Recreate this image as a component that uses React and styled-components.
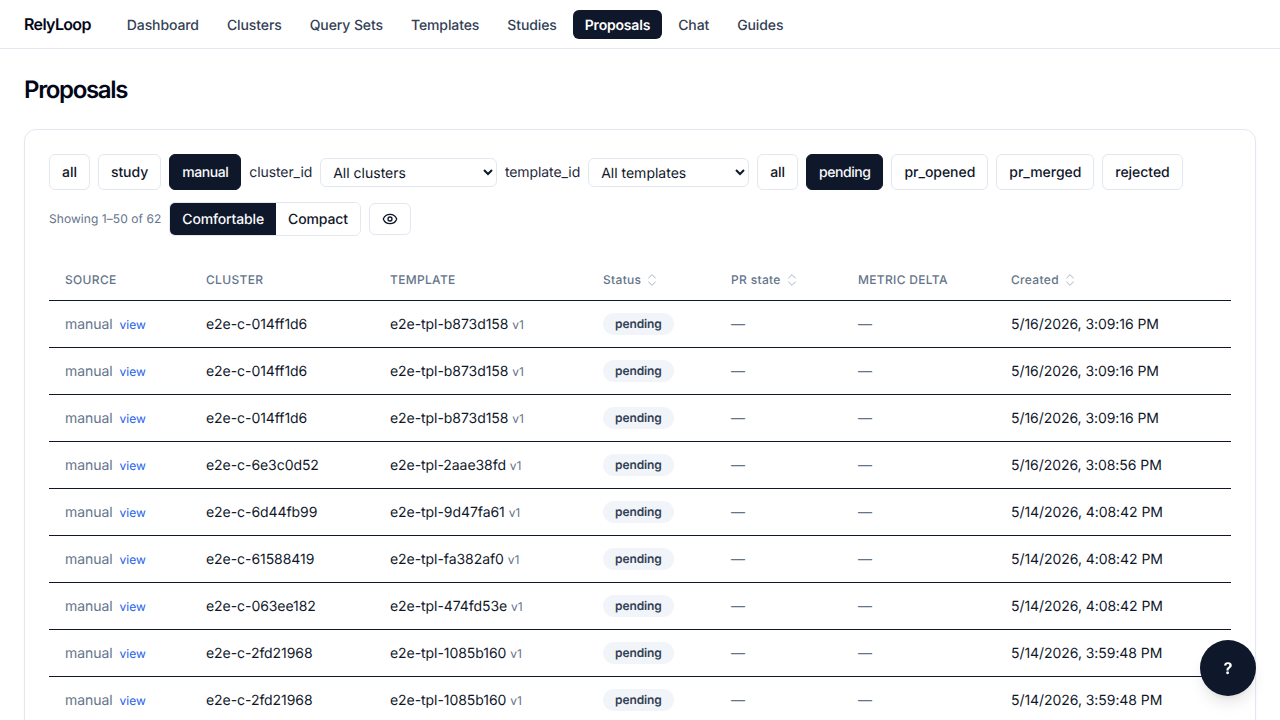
import React from "react";
import styled, { createGlobalStyle } from "styled-components";
import { ChevronsUpDown, Eye } from "lucide-react";

const navLinks = ["Dashboard", "Clusters", "Query Sets", "Templates", "Studies", "Proposals", "Chat", "Guides"];

const rows = [
  ["e2e-c-014ff1d6", "e2e-tpl-b873d158", "5/16/2026, 3:09:16 PM"],
  ["e2e-c-014ff1d6", "e2e-tpl-b873d158", "5/16/2026, 3:09:16 PM"],
  ["e2e-c-014ff1d6", "e2e-tpl-b873d158", "5/16/2026, 3:09:16 PM"],
  ["e2e-c-6e3c0d52", "e2e-tpl-2aae38fd", "5/16/2026, 3:08:56 PM"],
  ["e2e-c-6d44fb99", "e2e-tpl-9d47fa61", "5/14/2026, 4:08:42 PM"],
  ["e2e-c-61588419", "e2e-tpl-fa382af0", "5/14/2026, 4:08:42 PM"],
  ["e2e-c-063ee182", "e2e-tpl-474fd53e", "5/14/2026, 4:08:42 PM"],
  ["e2e-c-2fd21968", "e2e-tpl-1085b160", "5/14/2026, 3:59:48 PM"],
  ["e2e-c-2fd21968", "e2e-tpl-1085b160", "5/14/2026, 3:59:48 PM"],
];

const columns = [
  { label: "Source", width: 141 },
  { label: "Cluster", width: 184 },
  { label: "Template", width: 213 },
  { label: "Status", width: 128, sortable: true },
  { label: "PR state", width: 127, sortable: true },
  { label: "Metric delta", width: 153 },
  { label: "Created", width: 236, sortable: true },
];

const App = () => (
  <>
    <GlobalStyle />
    <Nav>
      <Logo>RelyLoop</Logo>
      <NavLinks>
        {navLinks.map((link) => (
          <NavItem key={link} $active={link === "Proposals"}>
            {link}
          </NavItem>
        ))}
      </NavLinks>
    </Nav>
    <Main>
      <Title>Proposals</Title>
      <Card>
        <FilterRow>
          <FilterButton>all</FilterButton>
          <FilterButton>study</FilterButton>
          <FilterButton $active>manual</FilterButton>
          <FilterLabel>cluster_id</FilterLabel>
          <Select $width={176.7}>
            <option>All clusters</option>
          </Select>
          <FilterLabel>template_id</FilterLabel>
          <Select $width={161}>
            <option>All templates</option>
          </Select>
          <FilterButton>all</FilterButton>
          <FilterButton $active>pending</FilterButton>
          <FilterButton>pr_opened</FilterButton>
          <FilterButton>pr_merged</FilterButton>
          <FilterButton>rejected</FilterButton>
        </FilterRow>
        <ToolRow>
          <Showing>Showing 1–50 of 62</Showing>
          <Density>
            <DensityOption $active>Comfortable</DensityOption>
            <DensityOption>Compact</DensityOption>
          </Density>
          <ColumnsButton aria-label="Columns">
            <Eye size={16} strokeWidth={2} />
          </ColumnsButton>
        </ToolRow>
        <Table>
          <colgroup>
            {columns.map((col) => (
              <col key={col.label} width={col.width} />
            ))}
          </colgroup>
          <thead>
            <tr>
              {columns.map((col) => (
                <Th key={col.label} $sortable={col.sortable}>
                  <HeadInner>
                    {col.label}
                    {col.sortable && <ChevronsUpDown size={16} strokeWidth={1.5} color="#a8b4c4" />}
                  </HeadInner>
                </Th>
              ))}
            </tr>
          </thead>
          <tbody>
            {rows.map(([cluster, template, created], i) => (
              <tr key={i}>
                <Td>
                  <Source>manual</Source>
                  <ViewLink>view</ViewLink>
                </Td>
                <Td>{cluster}</Td>
                <Td>
                  {template} <Version>v1</Version>
                </Td>
                <BadgeCell>
                  <Badge>pending</Badge>
                </BadgeCell>
                <Td>
                  <Dash>—</Dash>
                </Td>
                <Td>
                  <Dash>—</Dash>
                </Td>
                <Td>{created}</Td>
              </tr>
            ))}
          </tbody>
        </Table>
      </Card>
    </Main>
    <HelpButton>?</HelpButton>
  </>
);

const GlobalStyle = createGlobalStyle`
  * { box-sizing: border-box; }
  html, body { margin: 0; background: #fff; }
  html { overflow: hidden; }
  body {
    height: 720px;
    overflow: hidden;
    font-family: Inter, "Liberation Sans", sans-serif;
    color: #0f172a;
    text-rendering: geometricPrecision;
  }
  button, select { text-rendering: geometricPrecision; }
`;

const Nav = styled.nav`
  height: 49px;
  display: flex;
  align-items: center;
  padding: 0 24px;
  border-bottom: 1px solid #e2e8f0;
`;

const Logo = styled.div`
  font-size: 16px;
  font-weight: 600;
  letter-spacing: -0.65px;
  color: #020617;
  margin-right: 24px;
`;

const NavLinks = styled.div`
  display: flex;
  gap: 4px;
`;

const NavItem = styled.a`
  height: 29px;
  display: flex;
  align-items: center;
  padding: 2px 12px 0;
  border-radius: 6px;
  font-size: 14px;
  letter-spacing: ${({ $active }) => ($active ? "-0.2px" : "-0.1px")};
  font-weight: ${({ $active }) => ($active ? 600 : 500)};
  color: ${({ $active }) => ($active ? "#fff" : "#334155")};
  background: ${({ $active }) => ($active ? "#0f172a" : "transparent")};
`;

const Main = styled.main`
  padding: 25px 24px 24px;
`;

const Title = styled.h1`
  margin: 0 0 23px;
  font-size: 24px;
  line-height: 32px;
  font-weight: 600;
  letter-spacing: -1.35px;
  color: #020617;
`;

const Card = styled.section`
  border: 1px solid #e2e8f0;
  border-radius: 12px;
  padding: 24px;
  box-shadow: 0 1px 2px rgba(0, 0, 0, 0.05);
`;

const FilterRow = styled.div`
  display: flex;
  align-items: center;
  gap: 8px;
`;

const FilterButton = styled.button`
  height: 36px;
  padding: 0 12px;
  border-radius: 6px;
  border: 1px solid ${({ $active }) => ($active ? "#0f172a" : "#e2e8f0")};
  background: ${({ $active }) => ($active ? "#0f172a" : "#fff")};
  color: ${({ $active }) => ($active ? "#f8fafc" : "#0f172a")};
  font: 500 14px Inter, sans-serif;
  letter-spacing: ${({ $active }) => ($active ? "-0.45px" : "-0.04px")};
`;

const FilterLabel = styled.span`
  font-size: 14px;
  letter-spacing: -0.08px;
  color: #1e293b;
`;

const Select = styled.select`
  width: ${({ $width }) => $width}px;
  height: 29px;
  margin-top: 1px;
  padding: 2px 0 0 8px;
  border: 1px solid #e2e8f0;
  border-radius: 6px;
  background: #fff;
  color: #0f172a;
  font: 400 14px Inter, sans-serif;
`;

const ToolRow = styled.div`
  display: flex;
  align-items: center;
  gap: 8px;
  margin-top: 12px;
`;

const Showing = styled.span`
  font-size: 12px;
  letter-spacing: 0.06px;
  padding-bottom: 1px;
  color: #64748b;
`;

const Density = styled.div`
  display: flex;
  height: 34px;
  border: 1px solid #e2e8f0;
  border-radius: 6px;
  overflow: hidden;
`;

const DensityOption = styled.button`
  padding: 0 12px;
  border: 0;
  background: ${({ $active }) => ($active ? "#0f172a" : "#fff")};
  color: ${({ $active }) => ($active ? "#f8fafc" : "#0f172a")};
  font: 500 14px Inter, sans-serif;
  letter-spacing: -0.15px;
`;

const ColumnsButton = styled.button`
  width: 42px;
  height: 32px;
  display: flex;
  align-items: center;
  justify-content: center;
  border: 1px solid #e2e8f0;
  border-radius: 6px;
  background: #fff;
  color: #0f172a;
`;

const Table = styled.table`
  width: 1182px;
  margin-top: 24px;
  table-layout: fixed;
  border-collapse: collapse;
`;

const Th = styled.th`
  height: 40px;
  padding: 0 16px;
  text-align: left;
  font-size: 12px;
  font-weight: 500;
  letter-spacing: 0.32px;
  color: #64748b;
  text-transform: ${({ $sortable }) => ($sortable ? "none" : "uppercase")};
  border-bottom: 1px solid #0f172a;
`;

const HeadInner = styled.span`
  display: inline-flex;
  align-items: center;
  gap: 3px;
`;

const Td = styled.td`
  height: 47px;
  padding: 2px 16px 0;
  font-size: 14px;
  letter-spacing: -0.06px;
  color: #0f172a;
  white-space: nowrap;
  border-bottom: 1px solid #0f172a;
`;

const BadgeCell = styled(Td)`
  padding-top: 0;
`;

const Source = styled.span`
  color: #64748b;
`;

const ViewLink = styled.a`
  margin-left: 7px;
  font-size: 12px;
  letter-spacing: 0;
  color: #2563eb;
`;

const Version = styled.span`
  font-size: 12px;
  color: #64748b;
`;

const Badge = styled.span`
  display: inline-block;
  padding: 2px 12px;
  border-radius: 999px;
  background: #f1f5f9;
  font-size: 12px;
  line-height: 18px;
  font-weight: 600;
  letter-spacing: -0.1px;
  color: #334155;
`;

const Dash = styled.span`
  color: #64748b;
`;

const HelpButton = styled.button`
  position: fixed;
  right: 24px;
  bottom: 24px;
  width: 56px;
  height: 56px;
  border: 0;
  border-radius: 50%;
  background: #0f172a;
  color: #fff;
  font: 700 16px Inter, sans-serif;
  box-shadow: 0 10px 15px -3px rgba(0, 0, 0, 0.1), 0 4px 6px -4px rgba(0, 0, 0, 0.1);
`;

export default App;
